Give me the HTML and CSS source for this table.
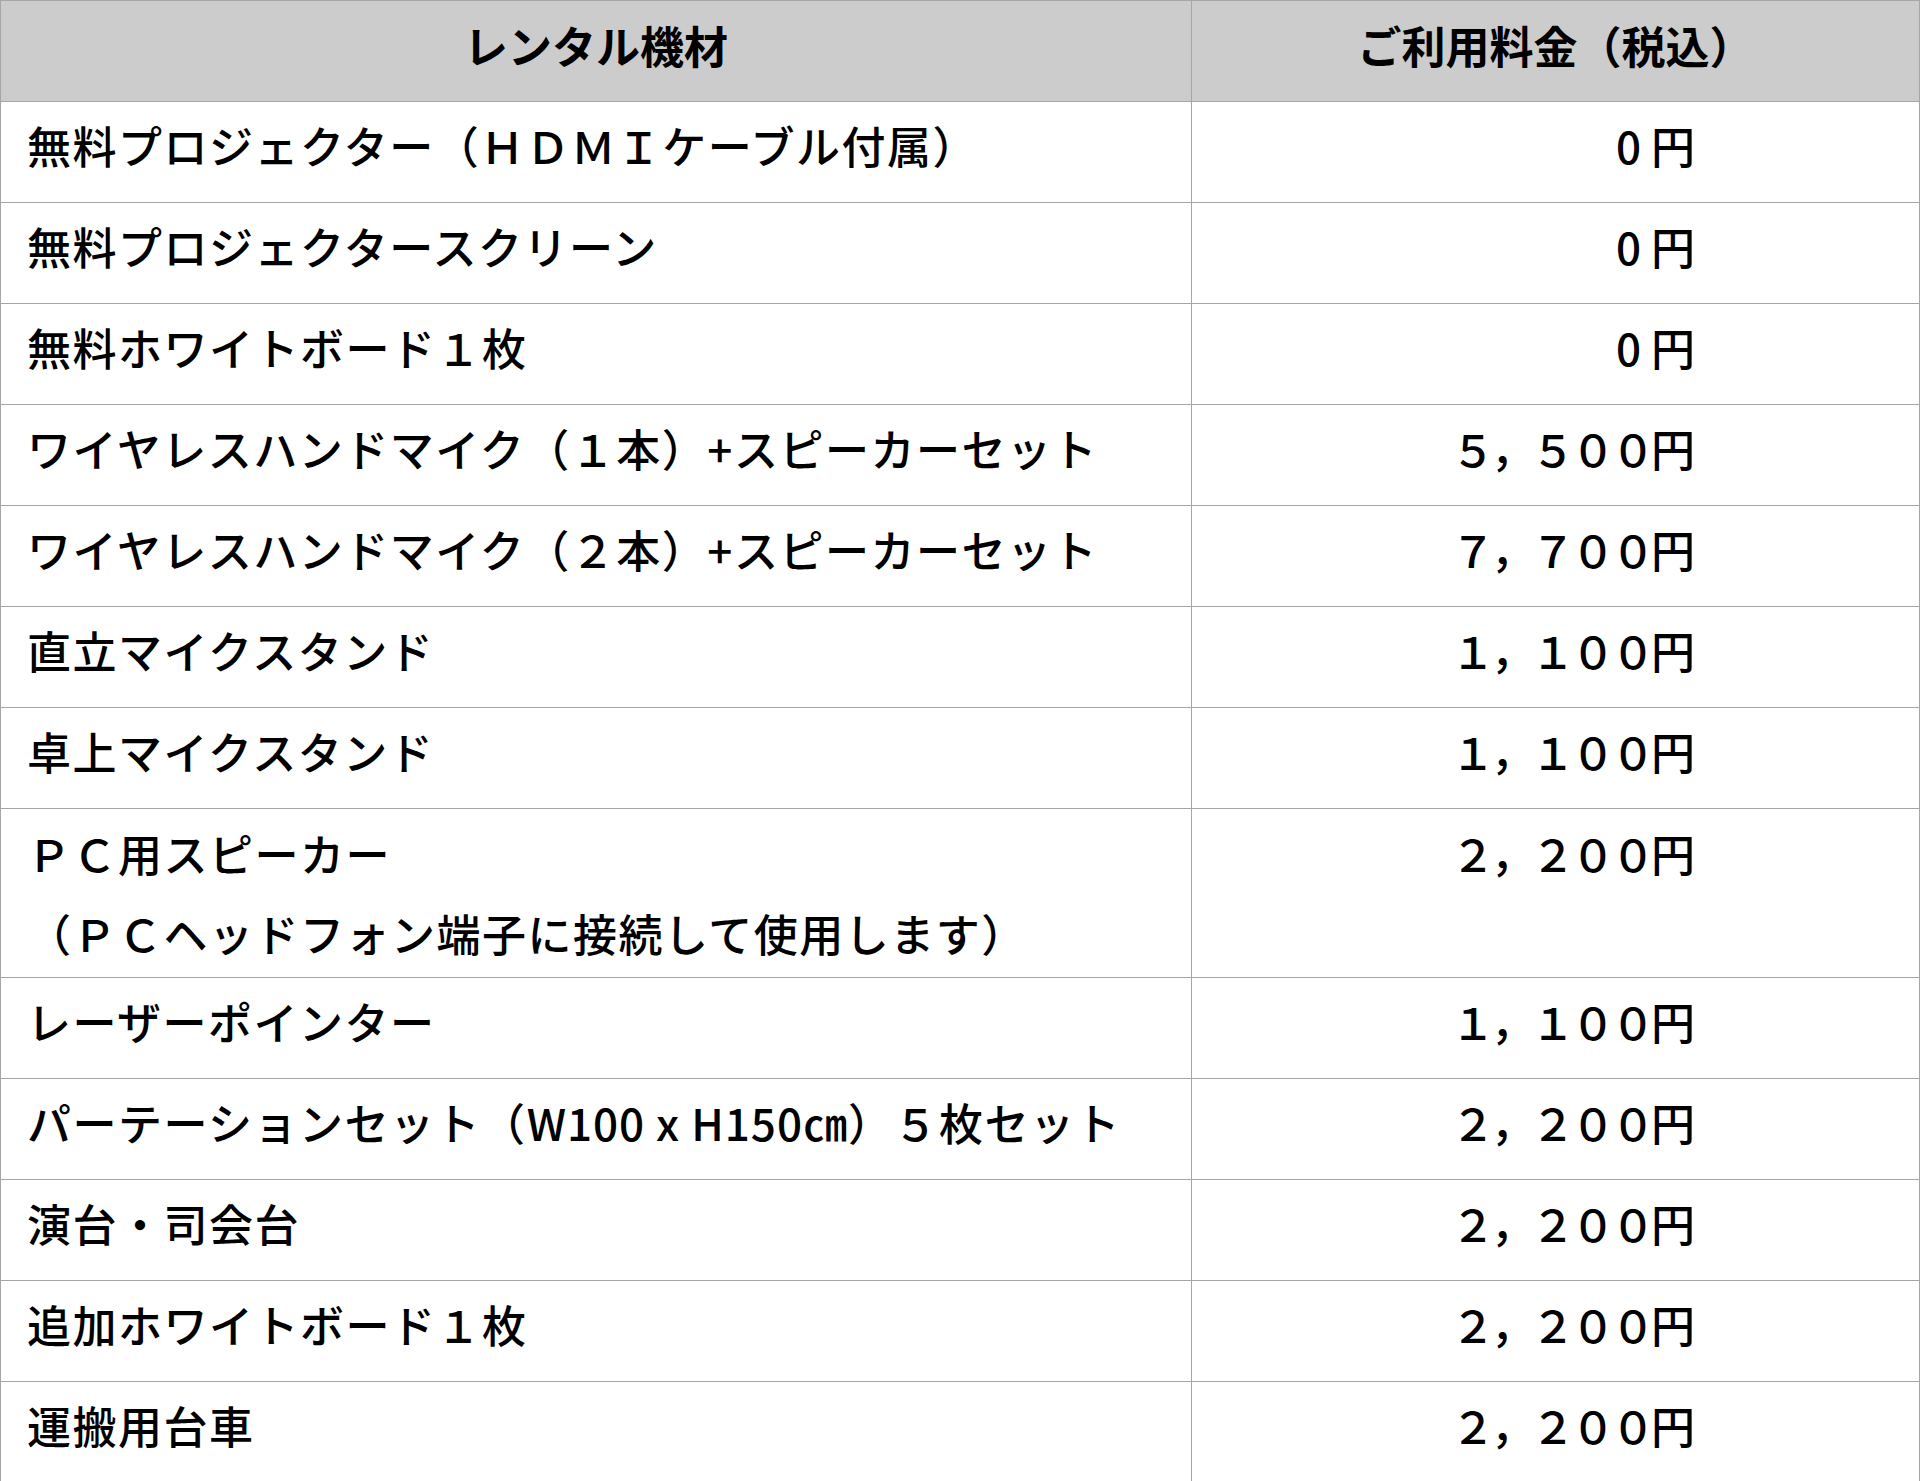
FILE: index.html
```html
<!DOCTYPE html>
<html lang="ja">
<head>
<meta charset="utf-8">
<title>レンタル機材</title>
<link rel="stylesheet" href="styles.css">
</head>
<body>
<table class="rental">
  <thead>
    <tr>
      <th class="col-item">レンタル機材</th>
      <th class="col-price">ご利用料金（税込）</th>
    </tr>
  </thead>
  <tbody>
    <tr><td class="item">無料プロジェクター（ＨＤＭＩケーブル付属）</td><td class="price"><span class="zero">0</span>円</td></tr>
    <tr><td class="item">無料プロジェクタースクリーン</td><td class="price"><span class="zero">0</span>円</td></tr>
    <tr><td class="item">無料ホワイトボード１枚</td><td class="price"><span class="zero">0</span>円</td></tr>
    <tr><td class="item">ワイヤレスハンドマイク（１本）+スピーカーセット</td><td class="price">５，５００円</td></tr>
    <tr><td class="item">ワイヤレスハンドマイク（２本）+スピーカーセット</td><td class="price">７，７００円</td></tr>
    <tr><td class="item">直立マイクスタンド</td><td class="price">１，１００円</td></tr>
    <tr><td class="item">卓上マイクスタンド</td><td class="price">１，１００円</td></tr>
    <tr class="tall"><td class="item">ＰＣ用スピーカー<br>（ＰＣヘッドフォン端子に接続して使用します）</td><td class="price">２，２００円</td></tr>
    <tr><td class="item">レーザーポインター</td><td class="price">１，１００円</td></tr>
    <tr><td class="item">パーテーションセット（<span class="latin">W100 x H150㎝</span>）５枚セット</td><td class="price">２，２００円</td></tr>
    <tr><td class="item">演台・司会台</td><td class="price">２，２００円</td></tr>
    <tr><td class="item">追加ホワイトボード１枚</td><td class="price">２，２００円</td></tr>
    <tr><td class="item">運搬用台車</td><td class="price">２，２００円</td></tr>
  </tbody>
</table>
</body>
</html>
```

FILE: styles.css
```css
html, body {
  margin: 0;
  padding: 0;
  background: #ffffff;
}

body {
  font-family: "Noto Sans CJK JP", "Noto Sans", sans-serif;
  color: #000000;
}

.rental {
  width: 1920px;
  border-collapse: collapse;
  table-layout: fixed;
}

.rental th,
.rental td {
  border: 1px solid #a6a6a6;
  font-size: 44px;
  line-height: 80px;
  padding: 3px 0 17px 0;
  vertical-align: top;
  white-space: nowrap;
}

.rental th {
  background: #cccccc;
  font-weight: 700;
  text-align: center;
  padding: 4px 0 16px 0;
}

.col-item {
  width: 1190px;
}

.item {
  padding-left: 26px !important;
  text-align: left;
  font-weight: 500;
  letter-spacing: 1.5px;
}

.latin {
  letter-spacing: 1px;
}

.price {
  text-align: right;
  padding-right: 228px !important;
  letter-spacing: -4px;
  font-weight: 500;
}

.zero {
  margin-right: 14px;
}

.tall td {
  padding-top: 4px;
  padding-bottom: 4px;
}
```
